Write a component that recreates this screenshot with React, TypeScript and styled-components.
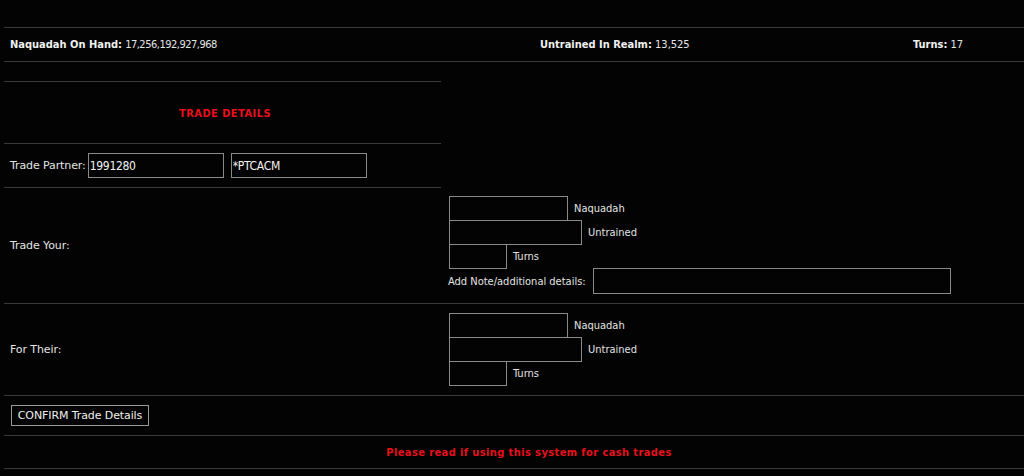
import React from "react";
import styled, { createGlobalStyle } from "styled-components";

const Global = createGlobalStyle`
  html, body { margin: 0; padding: 0; background: #030303; }
  body {
    font-family: "DejaVu Sans Condensed", "DejaVu Sans", sans-serif;
    font-size: 11px;
    color: #e4e4e4;
  }
`;

const Page = styled.div`
  width: 1024px;
  height: 476px;
  overflow: hidden;
  padding: 27px 0 0 4px;
  box-sizing: border-box;
  background: #030303;
`;

const StatsRow = styled.div`
  display: grid;
  grid-template-columns: 530px 373px 1fr;
  height: 33px;
  align-items: center;
  border-top: 1px solid #3a3a3a;
  border-bottom: 1px solid #3a3a3a;
`;

const Stat = styled.div`
  padding-left: 6px;
  white-space: nowrap;
`;

const StatLabel = styled.b`
  font-weight: bold;
  color: #f0f0f0;
`;

const StatValue = styled.span<{ $tight?: boolean }>`
  letter-spacing: ${(p) => (p.$tight ? "-0.5px" : "0")};
`;

const Gap = styled.div`
  height: 19px;
`;

const Row = styled.div<{ $h: number; $full?: boolean }>`
  display: grid;
  grid-template-columns: 437px 1fr;
  height: ${(p) => p.$h}px;
  box-sizing: border-box;
  border-bottom: ${(p) => (p.$full ? "1px solid #3a3a3a" : "none")};
`;

const LeftCell = styled.div<{ $line?: boolean; $top?: boolean; $center?: boolean }>`
  display: flex;
  align-items: center;
  justify-content: ${(p) => (p.$center ? "center" : "flex-start")};
  padding-left: ${(p) => (p.$center ? 0 : 6)}px;
  box-sizing: border-box;
  border-bottom: ${(p) => (p.$line ? "1px solid #3a3a3a" : "none")};
  border-top: ${(p) => (p.$top ? "1px solid #3a3a3a" : "none")};
  gap: 2px;
  white-space: nowrap;
`;

const RowLabel = styled.span`
  font-family: "DejaVu Sans", sans-serif;
  font-size: 11px;
  letter-spacing: -0.1px;
`;

const RightCell = styled.div<{ $pt: number }>`
  padding: ${(p) => p.$pt}px 0 0 8px;
  display: flex;
  flex-direction: column;
  align-items: flex-start;
`;

const Title = styled.div`
  color: #e8101c;
  font-weight: bold;
  font-size: 11px;
  letter-spacing: 0.45px;
  margin-left: 5px;
  padding-top: 2px;
`;

const TextBox = styled.input<{ $w: number; $h?: number; $ml?: number }>`
  width: ${(p) => p.$w}px;
  height: ${(p) => p.$h ?? 25}px;
  box-sizing: border-box;
  background: #030303;
  border: 1px solid #8a8a8a;
  color: #f2f2f2;
  font-family: "DejaVu Sans Condensed", "DejaVu Sans", sans-serif;
  font-size: 12px;
  letter-spacing: -0.3px;
  padding: 0 1px;
  outline: none;
  margin: 0 0 0 ${(p) => p.$ml ?? 0}px;
`;

const AmountLine = styled.div`
  display: flex;
  align-items: center;
  gap: 6px;
  & + & {
    margin-top: -1px;
  }
`;

const NoteLine = styled.div`
  display: flex;
  align-items: center;
  gap: 7px;
  margin-top: -1px;
  margin-left: -1px;
`;

const Button = styled.button`
  font-family: "DejaVu Sans", sans-serif;
  font-size: 11px;
  letter-spacing: -0.1px;
  color: #f0f0f0;
  background: #030303;
  border: 1px solid #9a9a9a;
  height: 21px;
  width: 138px;
  padding: 0;
  margin-left: 1px;
  cursor: pointer;
`;

const NoticeRow = styled.div`
  display: flex;
  justify-content: center;
  align-items: center;
  height: 34px;
  box-sizing: border-box;
  border-top: 1px solid #3a3a3a;
  border-bottom: 1px solid #3a3a3a;
  width: 1020px;
  margin-top: -1px;
`;

const Notice = styled.a`
  color: #e8101c;
  font-weight: bold;
  text-decoration: none;
  letter-spacing: 0.4px;
  margin-left: 30px;
`;

function Amounts() {
  return (
    <>
      <AmountLine>
        <TextBox $w={119} />
        <span>Naquadah</span>
      </AmountLine>
      <AmountLine>
        <TextBox $w={133} />
        <span>Untrained</span>
      </AmountLine>
      <AmountLine>
        <TextBox $w={58} />
        <span>Turns</span>
      </AmountLine>
    </>
  );
}

export default function App() {
  return (
    <>
      <Global />
      <Page>
        <StatsRow>
          <Stat>
            <StatLabel>Naquadah On Hand:</StatLabel> <StatValue $tight>17,256,192,927,968</StatValue>
          </Stat>
          <Stat>
            <StatLabel>Untrained In Realm:</StatLabel> <StatValue>13,525</StatValue>
          </Stat>
          <Stat>
            <StatLabel>Turns:</StatLabel> <StatValue>17</StatValue>
          </Stat>
        </StatsRow>
        <Gap />
        <Row $h={63}>
          <LeftCell $top $line $center>
            <Title>TRADE DETAILS</Title>
          </LeftCell>
          <div />
        </Row>
        <Row $h={44}>
          <LeftCell $line>
            <RowLabel>Trade Partner:</RowLabel>
            <TextBox $w={136} defaultValue="1991280" />
            <TextBox $w={136} $ml={5} defaultValue="*PTCACM" />
          </LeftCell>
          <div />
        </Row>
        <Row $h={116} $full>
          <LeftCell>
            <RowLabel>Trade Your:</RowLabel>
          </LeftCell>
          <RightCell $pt={8}>
            <Amounts />
            <NoteLine>
              <span>Add Note/additional details:</span>
              <TextBox $w={358} $h={26} />
            </NoteLine>
          </RightCell>
        </Row>
        <Row $h={92} $full>
          <LeftCell>
            <RowLabel>For Their:</RowLabel>
          </LeftCell>
          <RightCell $pt={9}>
            <Amounts />
          </RightCell>
        </Row>
        <Row $h={40}>
          <LeftCell $line>
            <Button>CONFIRM Trade Details</Button>
          </LeftCell>
          <div />
        </Row>
        <NoticeRow>
          <Notice href="#">Please read if using this system for cash trades</Notice>
        </NoticeRow>
      </Page>
    </>
  );
}
